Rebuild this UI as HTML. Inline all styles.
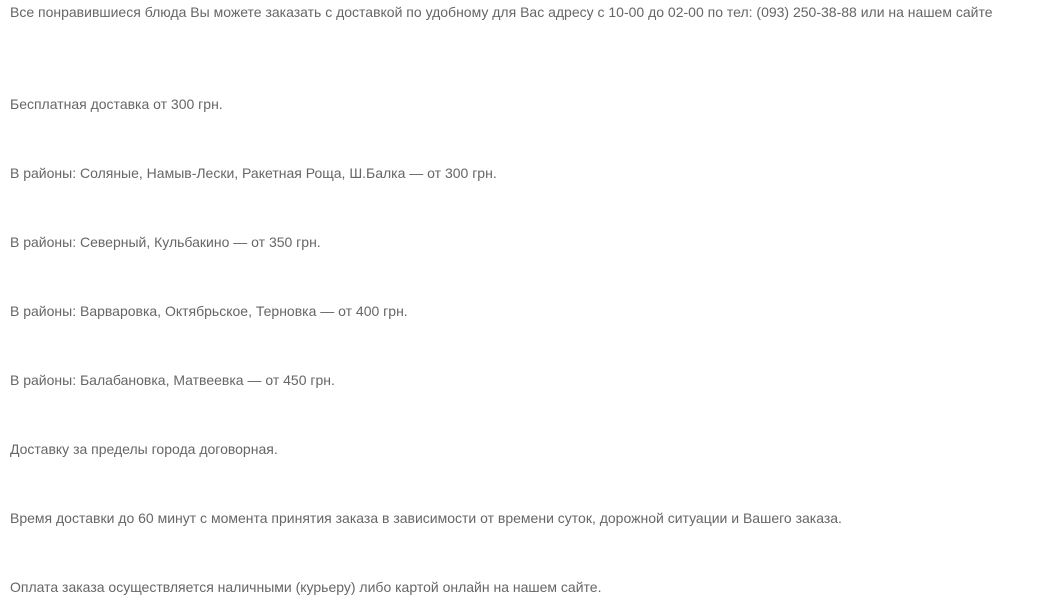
<!DOCTYPE html>
<html><head><meta charset="utf-8"><style>
html,body{margin:0;padding:0;background:#fff;width:1061px;height:601px;overflow:hidden}
p{position:absolute;left:10px;margin:0;font-family:"Liberation Sans",Arial,sans-serif;font-size:14px;color:#666;line-height:18px;white-space:nowrap}
</style></head><body>
<p style="top:3px">Все понравившиеся блюда Вы можете заказать с доставкой по удобному для Вас адресу с 10-00 до 02-00 по тел: (093) 250-38-88 или на нашем сайте</p>
<p style="top:95px">Бесплатная доставка от 300 грн.</p>
<p style="top:164px">В районы: Соляные, Намыв-Лески, Ракетная Роща, Ш.Балка — от 300 грн.</p>
<p style="top:233px">В районы: Северный, Кульбакино — от 350 грн.</p>
<p style="top:302px">В районы: Варваровка, Октябрьское, Терновка — от 400 грн.</p>
<p style="top:371px">В районы: Балабановка, Матвеевка — от 450 грн.</p>
<p style="top:440px">Доставку за пределы города договорная.</p>
<p style="top:509px">Время доставки до 60 минут с момента принятия заказа в зависимости от времени суток, дорожной ситуации и Вашего заказа.</p>
<p style="top:578px">Оплата заказа осуществляется наличными (курьеру) либо картой онлайн на нашем сайте.</p>
</body></html>
